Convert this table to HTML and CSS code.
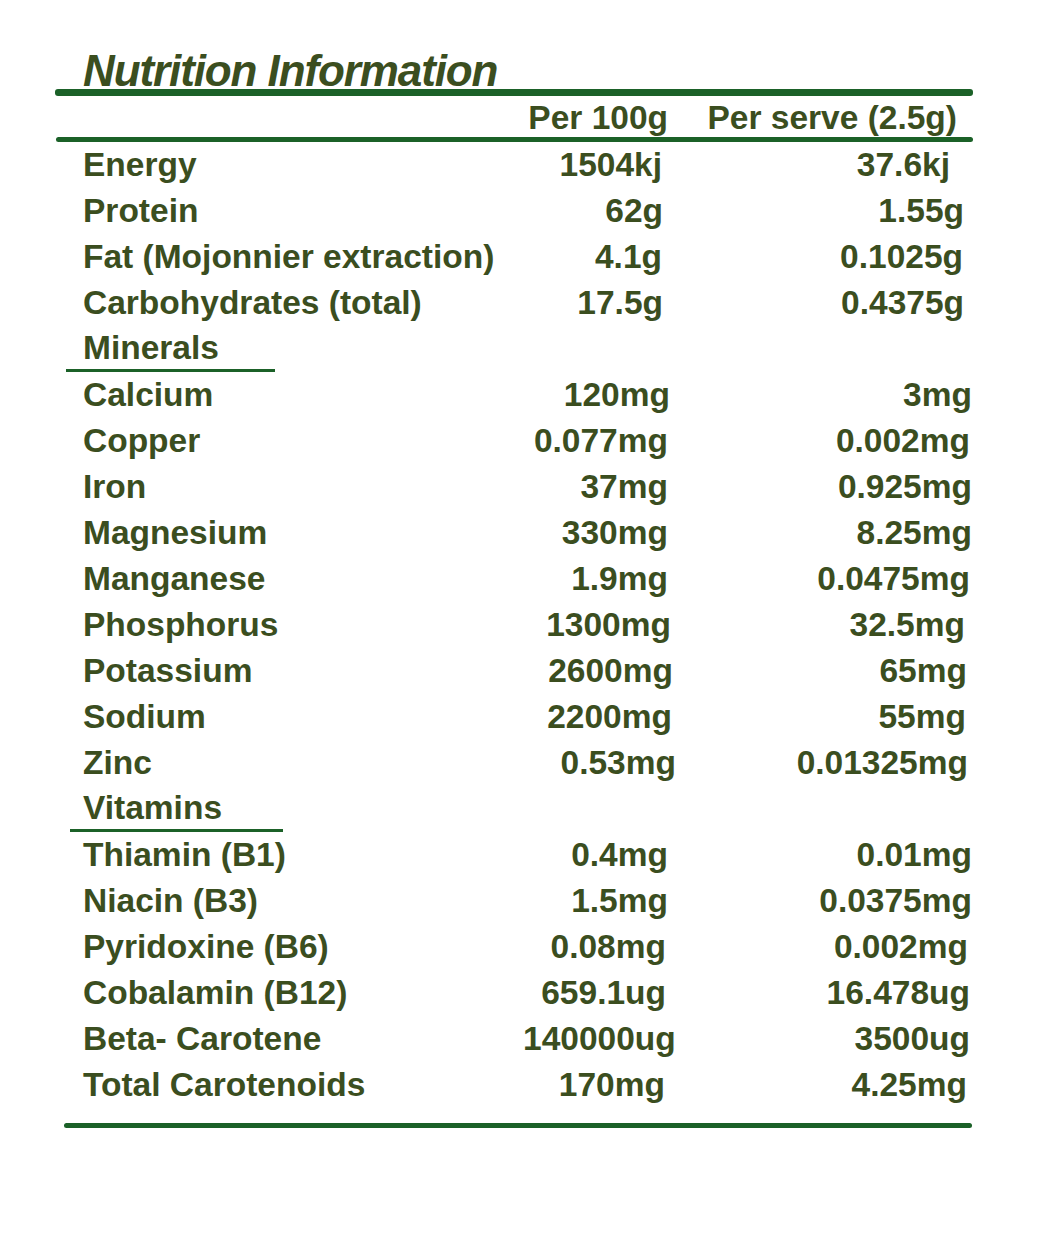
FILE: index.html
```html
<!DOCTYPE html>
<html lang="en">
<head>
<meta charset="utf-8">
<title>Nutrition Information</title>
<link rel="stylesheet" href="styles.css">
</head>
<body>
<main class="panel">
  <h1 class="title">Nutrition Information</h1>
  <div class="rule rule-top"></div>
  <div class="row head">
    <span class="label"></span>
    <span class="c1">Per 100g</span>
    <span class="c2 head-c2">Per serve (2.5g)</span>
  </div>
  <div class="rule rule-mid"></div>

  <div class="row"><span class="label">Energy</span><span class="c1 in-6">1504kj</span><span class="c2 in-20">37.6kj</span></div>
  <div class="row"><span class="label">Protein</span><span class="c1 in-5">62g</span><span class="c2 in-6">1.55g</span></div>
  <div class="row"><span class="label">Fat (Mojonnier extraction)</span><span class="c1 in-6">4.1g</span><span class="c2 in-7">0.1025g</span></div>
  <div class="row"><span class="label">Carbohydrates (total)</span><span class="c1 in-5">17.5g</span><span class="c2 in-6">0.4375g</span></div>

  <div class="row section"><span class="section-label minerals">Minerals</span></div>
  <div class="row"><span class="label">Calcium</span><span class="c1 out-2">120mg</span><span class="c2 out-2">3mg</span></div>
  <div class="row"><span class="label">Copper</span><span class="c1">0.077mg</span><span class="c2">0.002mg</span></div>
  <div class="row"><span class="label">Iron</span><span class="c1">37mg</span><span class="c2 out-2">0.925mg</span></div>
  <div class="row"><span class="label">Magnesium</span><span class="c1">330mg</span><span class="c2 out-2">8.25mg</span></div>
  <div class="row"><span class="label">Manganese</span><span class="c1">1.9mg</span><span class="c2">0.0475mg</span></div>
  <div class="row"><span class="label">Phosphorus</span><span class="c1 out-3">1300mg</span><span class="c2 in-5">32.5mg</span></div>
  <div class="row"><span class="label">Potassium</span><span class="c1 out-5">2600mg</span><span class="c2 in-3">65mg</span></div>
  <div class="row"><span class="label">Sodium</span><span class="c1 out-4">2200mg</span><span class="c2 in-4">55mg</span></div>
  <div class="row"><span class="label">Zinc</span><span class="c1 out-8">0.53mg</span><span class="c2 in-2">0.01325mg</span></div>

  <div class="row section"><span class="section-label vitamins">Vitamins</span></div>
  <div class="row"><span class="label">Thiamin (B1)</span><span class="c1">0.4mg</span><span class="c2 out-2">0.01mg</span></div>
  <div class="row"><span class="label">Niacin (B3)</span><span class="c1">1.5mg</span><span class="c2 out-2">0.0375mg</span></div>
  <div class="row"><span class="label">Pyridoxine (B6)</span><span class="c1 in-2">0.08mg</span><span class="c2 in-2">0.002mg</span></div>
  <div class="row"><span class="label">Cobalamin (B12)</span><span class="c1 in-2">659.1ug</span><span class="c2">16.478ug</span></div>
  <div class="row"><span class="label">Beta- Carotene</span><span class="c1">140000ug</span><span class="c2">3500ug</span></div>
  <div class="row"><span class="label">Total Carotenoids</span><span class="c1 in-3">170mg</span><span class="c2 in-3">4.25mg</span></div>

  <div class="rule rule-bottom"></div>
</main>
</body>
</html>
```
FILE: styles.css
```css
html, body {
  margin: 0;
  padding: 0;
  background: #ffffff;
}

.panel {
  width: 1040px;
  height: 1233px;
  padding-top: 52px;
  box-sizing: border-box;
  font-family: "Liberation Sans", Arial, sans-serif;
  font-weight: bold;
  color: #3b4e1f;
}

.title {
  margin: 0 0 0 83px;
  font-size: 44px;
  line-height: 37px;
  font-style: italic;
  font-weight: bold;
  letter-spacing: -1.1px;
}

.rule {
  background: #1b6128;
  border-radius: 3px;
}

.rule-top {
  height: 7px;
  margin-left: 55px;
  width: 918px;
}

.rule-mid {
  height: 5px;
  margin-left: 56px;
  width: 917px;
}

.rule-bottom {
  height: 5px;
  margin-left: 64px;
  width: 908px;
  margin-top: 15px;
}

.row {
  display: grid;
  grid-template-columns: 440px 145px 302px;
  padding-left: 83px;
  height: 46px;
  font-size: 33.5px;
  line-height: 46px;
  white-space: nowrap;
}

.row.head {
  height: 41px;
  line-height: 36px;
  padding-top: 4px;
  box-sizing: border-box;
}

.c1, .c2 {
  text-align: right;
}

.head-c2 {
  padding-right: 13px;
}

/* small hand-set nudges of the value columns */
.in-2 { padding-right: 2px; }
.in-3 { padding-right: 3px; }
.in-4 { padding-right: 4px; }
.in-5 { padding-right: 5px; }
.in-6 { padding-right: 6px; }
.in-7 { padding-right: 7px; }
.in-20 { padding-right: 20px; }
.out-2 { margin-right: -2px; }
.out-3 { margin-right: -3px; }
.out-4 { margin-right: -4px; }
.out-5 { margin-right: -5px; }
.out-8 { margin-right: -8px; }

.section {
  display: block;
  padding-left: 0;
}

.section-label {
  display: block;
  line-height: 43px;
  border-bottom: 3px solid #1b6128;
}

.section-label.minerals {
  margin-left: 66px;
  padding-left: 17px;
  width: 192px;
}

.section-label.vitamins {
  margin-left: 70px;
  padding-left: 13px;
  width: 200px;
}
```
